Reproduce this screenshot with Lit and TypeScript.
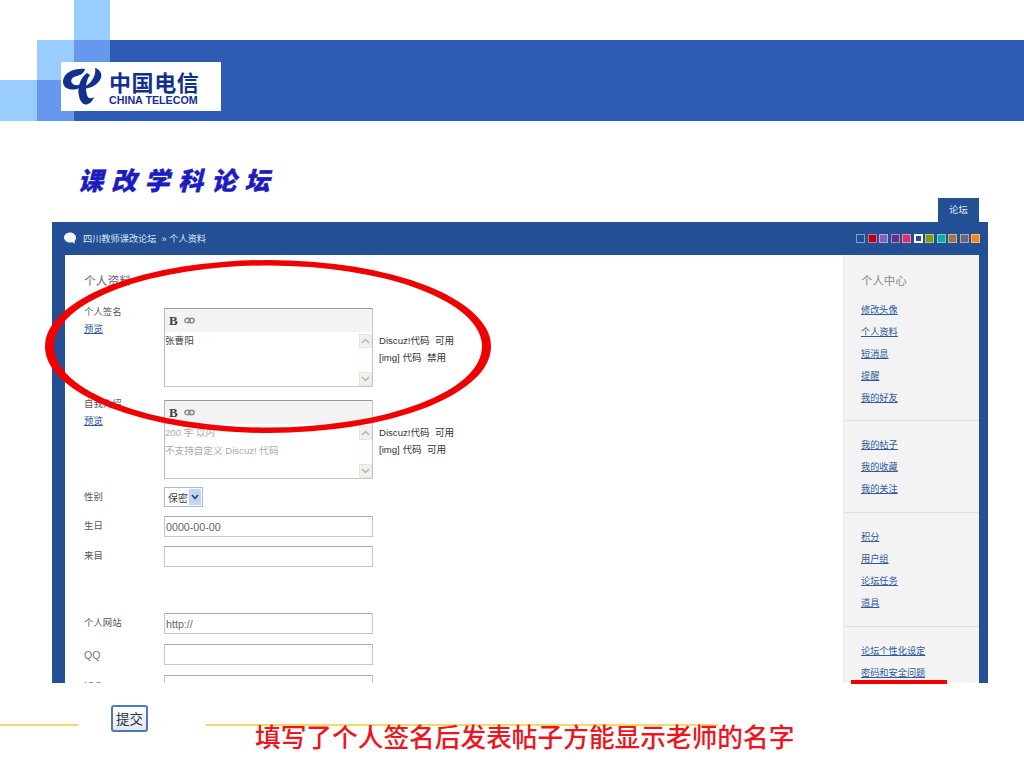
import { LitElement, html, css, svg } from "lit";
import { customElement } from "lit/decorators.js";

const SWATCHES = ["#234f94","#b00018","#7a66c0","#6a3080","#d83070","#234f94","#7aa010","#10a8a8","#a07848","#686878","#f08818"];
const SECTIONS = [
  ["修改头像","个人资料","短消息","提醒","我的好友"],
  ["我的帖子","我的收藏","我的关注"],
  ["积分","用户组","论坛任务","道具"],
  ["论坛个性化设定","密码和安全问题"],
];

const chev = (up: boolean) => svg`<svg class="chev" viewBox="0 0 9 6" width="9" height="6"><path d="${up ? "M1 5 L4.5 1.5 L8 5" : "M1 1 L4.5 4.5 L8 1"}" fill="none" stroke="#a8b4ac" stroke-width="1.4"/></svg>`;

@customElement("app-root")
export class AppRoot extends LitElement {
  static styles = css`
    :host { display: block; width: 1024px; height: 768px; }
    * { box-sizing: border-box; }
    .slide { position: relative; width: 1024px; height: 768px; overflow: hidden; background: #fff;
      font-family: "Liberation Sans", "Noto Sans CJK SC", sans-serif; }

    .head { position: relative; display: grid; grid-template-columns: 37px 37px 36px 1fr; grid-template-rows: 40px 40px 41px; height: 121px; }
    .lt { background: #99ccff; }
    .md { background: #6699ee; }
    .dk { background: #2e5cb4; }
    .logo { position: absolute; left: 61px; top: 62px; width: 160px; height: 49px; background: #fff; display: flex; align-items: center; padding-left: 2px; gap: 7px; color: #12318f; }
    .logo-text { display: flex; flex-direction: column; align-items: flex-start; }
    .cn { font-family: "Noto Sans CJK SC", sans-serif; font-weight: 700; font-size: 22px; line-height: 26px; letter-spacing: 0.6px; height: 26px; }
    .en { font-family: "Liberation Sans", sans-serif; font-weight: 700; font-size: 10.7px; line-height: 11px; margin-top: 1px; white-space: nowrap; }

    .title { margin: 40px 0 0 78px; height: 37px; font-family: "Noto Sans CJK SC", sans-serif; font-size: 25px; line-height: 36px; font-weight: 900; font-style: italic; letter-spacing: 8.3px; color: #1c1cc0; -webkit-text-stroke: 0.4px #1c1cc0; }

    .forum { margin-left: 52px; width: 936px; height: 485px; overflow: hidden; }
    .tabs { display: flex; justify-content: flex-end; padding-right: 9px; height: 24px; }
    .tab { width: 41px; background: #234f94; color: #e8eef8; font-size: 9.4px; line-height: 24px; text-align: center; }
    .panel { background: #234f94; padding: 0 9px 0 13px; height: 461px; }
    .bar { height: 33px; display: flex; align-items: center; color: #dfe7f5; font-size: 9.2px; margin-left: -1px; padding-bottom: 1px; }
    .bubble { margin-right: 7px; }
    .swatches { margin-left: auto; margin-right: -1px; display: flex; gap: 2.5px; }
    .sw { width: 9px; height: 9px; border: 1px solid rgba(255,255,255,.45); }
    .sw.on { border: 2px solid #fff; }

    .body { display: flex; height: 428px; }
    .main { width: 778px; background: #fff; padding: 16px 0 0 19px; color: #555; }
    .h { font-size: 11.8px; line-height: 20px; color: #666; margin-bottom: 17px; }
    .row { display: grid; grid-template-columns: 80px 209px 1fr; column-gap: 0; align-items: center; font-size: 9.4px; }
    .row.top { align-items: start; margin-bottom: 13px; }
    .row.top.gap8 { margin-bottom: 8px; }
    .lab { line-height: 17px; margin-top: -5px; color: #555; }
    .lab a, .side a { color: #2f5a9e; text-decoration: underline; }
    .mid { margin-top: -3px; }

    .box { position: relative; height: 79px; border: 1px solid #c8c8c8; border-top-color: #999; border-left-color: #bbb; background: #fff; }
    .tool { height: 23px; background: #f3f3f3; display: flex; align-items: center; padding-left: 4px; gap: 6px; }
    .b { font-family: "Liberation Serif", serif; font-weight: 700; font-size: 13px; color: #444; }
    .ta { padding: 0; font-size: 9.6px; line-height: 17px; color: #444; }
    .ph { color: #aaa; font-size: 9.6px; line-height: 18px; }
    .sb { position: absolute; right: 0; top: 23px; bottom: 0; width: 13px; background: #fdfdfd; display: flex; flex-direction: column; justify-content: space-between; padding: 2px 0 0; }
    .sb span { height: 14px; background: #f0f0ec; border: 1px solid #e6e6e2; display: flex; align-items: center; justify-content: center; }
    .rules { padding: 24px 0 0 6px; font-size: 9.6px; line-height: 17px; color: #333; white-space: nowrap; }

    .sel { width: 39px; height: 20px; border: 1px solid #a9bcd3; display: flex; align-items: center; justify-content: space-between; font-size: 10px; color: #444; padding: 1px 1px 1px 3px; }
    .sel span { width: 12px; height: 100%; background: #c3d5f3; display: flex; align-items: center; justify-content: center; }
    .inp { height: 21px; border: 1px solid #c8c8c8; border-top-color: #aaa; display: flex; align-items: center; padding-left: 1px; font-size: 10.7px; color: #666; }
    .gap9 { margin-bottom: 9px; }
    .gap46 { margin-bottom: 46px; }
    .gap10 { margin-bottom: 10px; }
    .qq { font-size: 10.5px; color: #777; }

    .side { width: 136px; background: #f3f3f3; border-left: 1px solid #e8e8e8; font-size: 9.2px; }
    .sec { padding: 14px 0 11px 17px; border-bottom: 1px solid #dedede; }
    .sec:last-child { border-bottom: 0; }
    .sec.first { padding-top: 16px; }
    .sh { font-size: 11.4px; line-height: 20px; color: #888; margin-bottom: 9px; }
    .lnk { line-height: 21.9px; height: 21.9px; }

    .strip { position: relative; height: 85px; padding-top: 41px; display: flex; align-items: flex-start; gap: 128px; }
    .ln { height: 2px; background: #f6da60; }
    .ln.a { width: 78px; }
    .ln.b2 { width: 512px; }
    .btn { position: absolute; left: 111px; top: 22px; width: 37px; height: 27px; border: 2px solid #4d7ab5; border-radius: 3px; background: linear-gradient(#fff, #dfe8f7); color: #333; font-size: 13.5px; line-height: 22px; text-align: center; font-family: "Noto Sans CJK SC", sans-serif; }
    .cap { position: absolute; left: 255px; top: 36px; font-family: "Noto Sans CJK SC", sans-serif; font-size: 25.7px; line-height: 34px; font-weight: 500; color: #ee1520; white-space: nowrap; }
    .under { position: absolute; left: 851px; top: 680px; width: 96px; height: 4px; background: #f00000; }
    .ring { position: absolute; left: 0; top: 0; pointer-events: none; }
  `;

  private box(body: unknown) {
    return html`<div class="box">
      <div class="tool"><span class="b">B</span>
        <svg width="11" height="7" viewBox="0 0 11 7"><g fill="none" stroke="#888" stroke-width="1.4"><ellipse cx="3.5" cy="3.5" rx="2.7" ry="2.2"/><ellipse cx="7.5" cy="3.5" rx="2.7" ry="2.2"/></g></svg>
      </div>
      ${body}
      <div class="sb"><span>${chev(true)}</span><span>${chev(false)}</span></div>
    </div>`;
  }

  render() {
    return html`<div class="slide">
      <div class="head">
        <div></div><div></div><div class="lt"></div><div></div>
        <div></div><div class="lt"></div><div class="md"></div><div class="dk"></div>
        <div class="lt"></div><div class="md"></div><div class="dk"></div><div class="dk"></div>
        <div class="logo">
          <svg width="39" height="38" viewBox="0 0 39 38" fill="currentColor">
            <path d="M22 1 C12 0 1 4 0 13 C-0.5 20 7 23 14 21 C17 20 19 18 20 15 C16 18 11 18 9 15 C7 12 9 9 14 8 C18 7 21 5 22 1 Z"/>
            <path d="M24 5 C17 10 14 20 16 28 C17 34 21 38 25 36 C28 35 30 32 31 29 C28 31 25 31 24 27 C22 20 23 12 27 7 Z"/>
            <path d="M32 0 C38 2 40 7 37 12 C34 17 27 21 18 21 C22 18 27 16 29 12 C31 9 33 5 32 0 Z"/>
          </svg>
          <div class="logo-text">
            <div class="cn">中国电信</div>
            <div class="en">CHINA TELECOM</div>
          </div>
        </div>
      </div>

      <div class="title">课改学科论坛</div>

      <div class="forum">
        <div class="tabs"><div class="tab">论坛</div></div>
        <div class="panel">
          <div class="bar">
            <svg class="bubble" width="12" height="12" viewBox="0 0 12 12"><path d="M6 0.5 C9.3 0.5 12 2.7 12 5.5 C12 7.3 11.3 8.5 10.5 9.3 L11 11.5 L8 10.3 C4 11.3 0 9 0 5.5 C0 2.7 2.7 0.5 6 0.5 Z" fill="#f4f6fa"/></svg>
            <span>四川教师课改论坛 &nbsp;» 个人资料</span>
            <div class="swatches">
              ${SWATCHES.map((c, i) => html`<div class="sw ${i === 5 ? "on" : ""}" style="background:${c}"></div>`)}
            </div>
          </div>
          <div class="body">
            <div class="main">
              <div class="h">个人资料</div>
              <div class="row top">
                <div class="lab">个人签名<br /><a>预览</a></div>
                ${this.box(html`<div class="ta">张曹阳</div>`)}
                <div class="rules">Discuz!代码 &nbsp;可用<br />[img] 代码 &nbsp;禁用</div>
              </div>
              <div class="row top gap8">
                <div class="lab">自我介绍<br /><a>预览</a></div>
                ${this.box(html`<div class="ta ph">200 字 以内<br />不支持自定义 Discuz! 代码</div>`)}
                <div class="rules">Discuz!代码 &nbsp;可用<br />[img] 代码 &nbsp;可用</div>
              </div>
              <div class="row gap9">
                <div class="mid">性别</div>
                <div class="sel">保密<span><svg width="8" height="6" viewBox="0 0 8 6"><path d="M1 1 L4 4.5 L7 1" fill="none" stroke="#24408c" stroke-width="1.6"/></svg></span></div>
              </div>
              <div class="row gap9"><div class="mid">生日</div><div class="inp">0000-00-00</div></div>
              <div class="row gap46"><div class="mid">来目</div><div class="inp"></div></div>
              <div class="row gap10"><div class="mid">个人网站</div><div class="inp">http://</div></div>
              <div class="row gap10"><div class="qq">QQ</div><div class="inp"></div></div>
              <div class="row"><div class="qq">ICQ</div><div class="inp"></div></div>
            </div>
            <div class="side">
              ${SECTIONS.map((links, i) => html`<div class="sec ${i === 0 ? "first" : ""}">
                ${i === 0 ? html`<div class="sh">个人中心</div>` : ""}
                ${links.map((l) => html`<div class="lnk"><a>${l}</a></div>`)}
              </div>`)}
            </div>
          </div>
        </div>
      </div>

      <div class="strip">
        <div class="ln a"></div><div class="ln b2"></div>
        <div class="btn">提交</div>
        <div class="cap">填写了个人签名后发表帖子方能显示老师的名字</div>
      </div>

      <div class="under"></div>
      <svg class="ring" width="1024" height="768" viewBox="0 0 1024 768">
        <path fill="#f00000" fill-rule="evenodd" d="M45 346.5 A223 86.5 0 1 1 491 346.5 A223 86.5 0 1 1 45 346.5 Z M54 346.5 A214 81 0 1 0 482 346.5 A214 81 0 1 0 54 346.5 Z"/>
      </svg>
    </div>`;
  }
}
